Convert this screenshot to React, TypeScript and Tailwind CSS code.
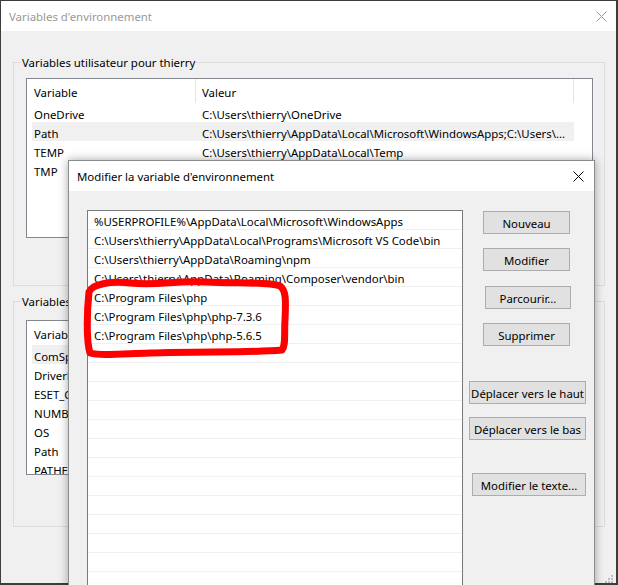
import React from 'react';

const userVars: [string, string][] = [
  ['OneDrive', 'C:\\Users\\thierry\\OneDrive'],
  ['Path', 'C:\\Users\\thierry\\AppData\\Local\\Microsoft\\WindowsApps;C:\\Users\\...'],
  ['TEMP', 'C:\\Users\\thierry\\AppData\\Local\\Temp'],
  ['TMP', 'C:\\Users\\thierry\\AppData\\Local\\Temp'],
];

const sysVars: [string, string][] = [
  ['ComSpec', 'C:\\WINDOWS\\system32\\cmd.exe'],
  ['DriverData', 'C:\\Windows\\System32\\Drivers\\DriverData'],
  ['ESET_OPTIONS', ''],
  ['NUMBER_OF_PROCESSORS', '4'],
  ['OS', 'Windows_NT'],
  ['Path', 'C:\\Program Files\\php;C:\\WINDOWS\\system32;...'],
  ['PATHEXT', '.COM;.EXE;.BAT;.CMD;.VBS;.VBE;.JS;.JSE'],
];

const pathEntries = [
  '%USERPROFILE%\\AppData\\Local\\Microsoft\\WindowsApps',
  'C:\\Users\\thierry\\AppData\\Local\\Programs\\Microsoft VS Code\\bin',
  'C:\\Users\\thierry\\AppData\\Roaming\\npm',
  'C:\\Users\\thierry\\AppData\\Roaming\\Composer\\vendor\\bin',
  'C:\\Program Files\\php',
  'C:\\Program Files\\php\\php-7.3.6',
  'C:\\Program Files\\php\\php-5.6.5',
];

function CloseX({ color }: { color: string }) {
  return (
    <svg width="11" height="11" viewBox="0 0 11 11">
      <path d="M0.5 0.5 L10.5 10.5 M10.5 0.5 L0.5 10.5" stroke={color} strokeWidth="1" fill="none" />
    </svg>
  );
}

function ListView({ rows, height, selected }: { rows: [string, string][]; height: string; selected: number }) {
  return (
    <div className={`${height} border border-[#828790] bg-white overflow-hidden`}>
      <div className="flex h-[24px] ml-[5px]">
        <div className="w-[164px] pl-[2px] pt-[2px] h-full flex items-center border-r border-[#e5e5e5]">Variable</div>
        <div className="w-[378px] pl-[6px] pt-[2px] h-full flex items-center border-r border-[#e5e5e5]">Valeur</div>
      </div>
      {rows.map(([k, v], i) => (
        <div key={k} className={`flex h-[19px] pt-[3px] ml-[5px] w-[542px] items-center ${i === selected ? 'bg-[#f0f0f0]' : ''}`}>
          <div className="w-[164px] pl-[2px] whitespace-nowrap overflow-hidden">{k}</div>
          <div className="w-[378px] pl-[6px] whitespace-nowrap overflow-hidden">{v}</div>
        </div>
      ))}
    </div>
  );
}

function Btn({ label, className }: { label: string; className: string }) {
  return (
    <div className={`h-[23px] shrink-0 pt-[1px] flex items-center justify-center whitespace-nowrap bg-[#e1e1e1] border border-[#adadad] ${className}`}>
      {label}
    </div>
  );
}

export default function App() {
  return (
    <div className="relative w-[618px] h-[585px] overflow-hidden bg-[#3d3d3d] font-['Noto_Sans',sans-serif] text-[11.4px] leading-[17px] text-black">
      {/* Fenêtre principale */}
      <div className="w-[617px] h-[584px] border border-[#3d3d3d] bg-[#f0f0f0] flex flex-col">
        <div className="h-[30px] shrink-0 bg-white flex items-center justify-between pl-[8px] pr-[9px] text-[#999999]">
          <span>Variables d'environnement</span>
          <CloseX color="#999999" />
        </div>

        <fieldset className="shrink-0 mt-[23px] ml-[12px] mr-[11px] border border-[#dcdcdc] pb-[47px]">
          <legend className="ml-[7px] px-[1px] leading-[17px]">Variables utilisateur pour thierry</legend>
          <div className="pl-[12px] pr-[11px] pt-[7px]">
            <ListView rows={userVars} height="h-[160px]" selected={1} />
          </div>
        </fieldset>

        <fieldset className="shrink-0 mt-[7px] ml-[12px] mr-[11px] border border-[#dcdcdc] pb-[51px]">
          <legend className="ml-[7px] px-[1px] leading-[17px]">Variables système</legend>
          <div className="pl-[12px] pr-[11px] pt-[10px]">
            <ListView rows={sysVars} height="h-[155px]" selected={0} />
          </div>
        </fieldset>
      </div>

      {/* poignée de redimensionnement */}
      <svg className="absolute left-[604px] top-[574px]" width="10" height="10" viewBox="0 0 10 10">
        {[[7, 1], [4, 4], [7, 4], [1, 7], [4, 7], [7, 7]].map(([x, y]) => (
          <rect key={`${x}-${y}`} x={x} y={y} width="2" height="2" fill="#bcbcbc" />
        ))}
      </svg>

      {/* Boîte de dialogue */}
      <div className="absolute left-[68px] top-[160px] w-[527px] h-[470px] border border-[#8c8c8c] bg-[#f0f0f0] shadow-[0_0_9px_rgba(0,0,0,0.35)] flex flex-col">
        <div className="h-[30px] shrink-0 bg-white flex items-center justify-between pl-[8px] pr-[10px]">
          <span>Modifier la variable d'environnement</span>
          <CloseX color="#000000" />
        </div>
        <div className="flex shrink-0 pl-[18px] pt-[19px]">
          <div className="w-[376px] h-[400px] border border-[#7a7a7a] bg-white overflow-hidden">
            {Array.from({ length: 22 }).map((_, i) => (
              <div key={i} className="h-[19px] border-b border-[#f0f0f0] pl-[6px] pt-[3px] flex items-center whitespace-nowrap">
                {pathEntries[i] ?? ''}
              </div>
            ))}
          </div>
          <div className="ml-[6px] flex flex-col">
            <Btn label="Nouveau" className="mt-[1px] ml-[14px] w-[87px]" />
            <Btn label="Modifier" className="mt-[14px] ml-[14px] w-[87px]" />
            <Btn label="Parcourir..." className="mt-[15px] ml-[16px] w-[86px]" />
            <Btn label="Supprimer" className="mt-[14px] ml-[14px] w-[87px]" />
            <Btn label="Déplacer vers le haut" className="mt-[35px] w-[117px]" />
            <Btn label="Déplacer vers le bas" className="mt-[13px] w-[117px]" />
            <Btn label="Modifier le texte..." className="mt-[33px] ml-[3px] w-[114px]" />
          </div>
        </div>
      </div>

      {/* annotation rouge */}
      <svg className="absolute left-0 top-0 pointer-events-none" width="618" height="585" viewBox="0 0 618 585">
        <path
          d="M89 292 C92 284 110 281 130 283 C160 286 175 280 205 282 C235 284 265 281 280 286 C286 290 286 300 285 320 C284 335 286 345 282 350 C250 353 200 351 150 353 C120 354 100 356 90 353 C86 340 87 310 89 292 Z"
          stroke="#ff0000"
          strokeWidth="7"
          fill="none"
          strokeLinejoin="round"
          strokeLinecap="round"
        />
      </svg>
    </div>
  );
}
